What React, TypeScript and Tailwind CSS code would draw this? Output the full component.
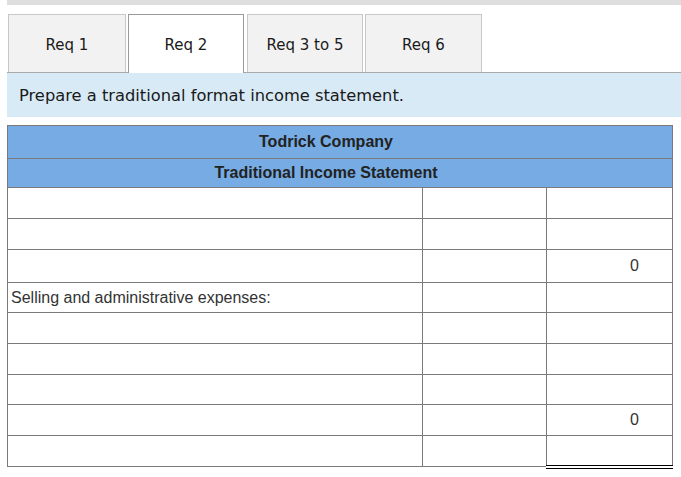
import React from "react";

// Tabs across the top; "Req 2" is the open one
const TABS = [
  { label: "Req 1", cls: "w-[118px] ml-[1px]" },
  { label: "Req 2", cls: "w-[116px] ml-[2px]" },
  { label: "Req 3 to 5", cls: "w-[116px] ml-[3px]" },
  { label: "Req 6", cls: "w-[117px] ml-[2px]" },
];
const ACTIVE = 1;

type Row = {
  label?: string;
  value?: string;
  h: string;
  topBlack?: boolean;
  bottomBlack?: boolean;
  doubleBottom?: boolean;
};

const ROWS: Row[] = [
  { h: "h-[31px]" },
  { h: "h-[31px]" },
  { h: "h-[33px]", value: "0", topBlack: true },
  { h: "h-[30px]", label: "Selling and administrative expenses:" },
  { h: "h-[31px]" },
  { h: "h-[31px]" },
  { h: "h-[30px]" },
  { h: "h-[31px]", value: "0", bottomBlack: true },
  { h: "h-[31px]", doubleBottom: true },
];

export default function App() {
  return (
    <div className="w-[681px] h-[477px] overflow-hidden bg-white pl-[7px]">
      <div className="h-[5px] bg-[#dedede]" />

      {/* tab strip */}
      <div className="mt-[9px] flex items-end border-b border-[#aaaaaa] font-['DejaVu_Sans',Verdana,sans-serif] text-[15px] text-[#1a1a1a]">
        {TABS.map((t, i) =>
          i === ACTIVE ? (
            <div
              key={t.label}
              className={t.cls + " h-[59px] -mb-px flex items-center justify-center bg-white border border-b-0 border-[#9a9a9a] pt-[3px]"}
            >
              {t.label}
            </div>
          ) : (
            <div
              key={t.label}
              className={t.cls + " h-[58px] flex items-center justify-center bg-[#f2f2f2] border border-b-0 border-[#c8c8c8] pt-[3px]"}
            >
              {t.label}
            </div>
          )
        )}
      </div>

      <div className="h-[44px] flex items-center pl-[12px] pt-[2px] bg-[#d9eaf7] font-['DejaVu_Sans',Verdana,sans-serif] text-[16.3px] text-[#1a1a1a]">
        Prepare a traditional format income statement.
      </div>

      {/* statement table */}
      <table className="mt-[8px] w-[666px] border-collapse font-['Liberation_Sans',Arial,sans-serif] text-[16px] text-[#333]">
        <colgroup>
          <col className="w-[415px]" />
          <col className="w-[125px]" />
          <col className="w-[126px]" />
        </colgroup>
        <tbody>
          <tr className="h-[33px] bg-[#76abe3]">
            <td colSpan={3} className="border border-[#7a7a7a] text-center font-bold text-[#222] p-0 pr-[28px]">
              Todrick Company
            </td>
          </tr>
          <tr className="h-[29px] bg-[#76abe3]">
            <td colSpan={3} className="border border-[#7a7a7a] text-center font-bold text-[#222] p-0 pr-[28px]">
              Traditional Income Statement
            </td>
          </tr>
          {ROWS.map((r, i) => (
            <tr key={i} className={r.h}>
              <td className="border border-[#7a7a7a] px-[3px] py-0 whitespace-nowrap">{r.label ?? ""}</td>
              <td className="border border-[#7a7a7a] p-0" />
              <td
                className={
                  "border border-[#7a7a7a] p-0 pr-[33px] text-right " +
                  (r.topBlack ? "border-t-black " : "") +
                  (r.bottomBlack ? "border-b-black " : "") +
                  (r.doubleBottom ? "border-b-[4px] border-b-black border-double " : "")
                }
              >
                {r.value ?? ""}
              </td>
            </tr>
          ))}
        </tbody>
      </table>
    </div>
  );
}
